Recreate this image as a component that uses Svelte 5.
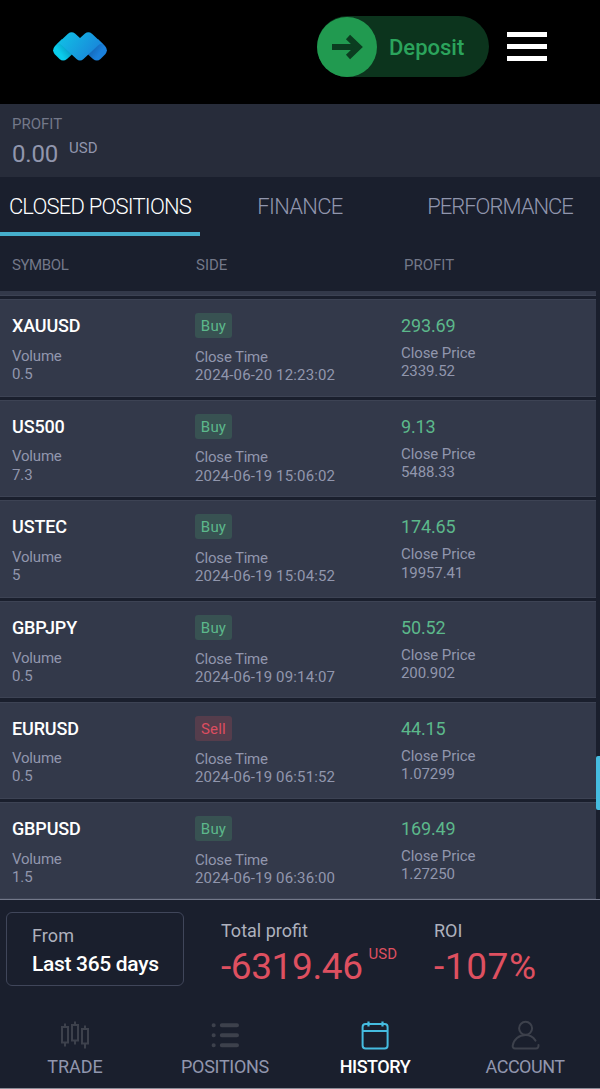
<script lang="ts">
	const tabs = [
		{ key: 'closed', text: 'CLOSED POSITIONS' },
		{ key: 'finance', text: 'FINANCE' },
		{ key: 'performance', text: 'PERFORMANCE' }
	];
	let activeTab = $state('closed');

	const positions = [
		{ symbol: 'XAUUSD', volume: '0.5', side: 'Buy', time: '2024-06-20 12:23:02', profit: '293.69', price: '2339.52' },
		{ symbol: 'US500', volume: '7.3', side: 'Buy', time: '2024-06-19 15:06:02', profit: '9.13', price: '5488.33' },
		{ symbol: 'USTEC', volume: '5', side: 'Buy', time: '2024-06-19 15:04:52', profit: '174.65', price: '19957.41' },
		{ symbol: 'GBPJPY', volume: '0.5', side: 'Buy', time: '2024-06-19 09:14:07', profit: '50.52', price: '200.902' },
		{ symbol: 'EURUSD', volume: '0.5', side: 'Sell', time: '2024-06-19 06:51:52', profit: '44.15', price: '1.07299' },
		{ symbol: 'GBPUSD', volume: '1.5', side: 'Buy', time: '2024-06-19 06:36:00', profit: '169.49', price: '1.27250' }
	];

	const nav = [
		{ key: 'trade', text: 'TRADE' },
		{ key: 'positions', text: 'POSITIONS' },
		{ key: 'history', text: 'HISTORY' },
		{ key: 'account', text: 'ACCOUNT' }
	];
	let activeNav = $state('history');
</script>

<div class="app">
	<header>
		<svg class="logo" width="56" height="32" viewBox="0 0 56 32">
			<defs>
				<linearGradient id="body" x1="0" y1="0" x2="1" y2="0.4">
					<stop offset="0" stop-color="#0fc8e6" />
					<stop offset="1" stop-color="#1a84da" />
				</linearGradient>
				<linearGradient id="left" x1="0.9" y1="0.3" x2="0.4" y2="0.7">
					<stop offset="0" stop-color="#078fb8" />
					<stop offset="1" stop-color="#0acdec" />
				</linearGradient>
				<linearGradient id="right" x1="0.1" y1="0.3" x2="0.6" y2="0.7">
					<stop offset="0" stop-color="#1260ac" />
					<stop offset="1" stop-color="#1a80dc" />
				</linearGradient>
			</defs>
			<path d="M10 8L3 15Q-.5 19 2.500 23L7.500 28Q11 31 15 28L20 23.500Z" fill="url(#left)" />
			<path d="M46 8L53 15Q56.500 19 53.500 23L48.500 28Q45 31 41 28L36 23.500Z" fill="url(#right)" />
			<path
				d="M3 15L16 2.800Q19.500 0 23 2.500L28 7L33 2.500Q36.500 0 40 2.800L53 15Q49.500 11.500 46 14.500L31.500 28Q28 31 24.500 28L10 14.500Q6.500 11.500 3 15Z"
				fill="url(#body)"
			/>
		</svg>
		<button class="deposit">
			<span class="deposit-icon">
				<svg width="32" height="26" viewBox="0 0 32 26" fill="none" stroke="#0b3d20">
					<path d="M1 13H27" stroke-width="6" />
					<path d="M17 3L27.500 13L17 23" stroke-width="6" />
				</svg>
			</span>
			<span class="deposit-text">Deposit</span>
		</button>
		<button class="menu" aria-label="Menu">
			<span></span>
			<span></span>
			<span></span>
		</button>
	</header>

	<section class="balance">
		<div class="balance-label">PROFIT</div>
		<div class="balance-value">0.00 <span class="currency">USD</span></div>
	</section>

	<div class="tabs">
		{#each tabs as tab (tab.key)}
			<button class="tab {tab.key}" class:active={tab.key === activeTab} onclick={() => (activeTab = tab.key)}>
				<span>{tab.text}</span>
			</button>
		{/each}
	</div>

	<div class="columns">
		<span class="col-symbol">SYMBOL</span>
		<span class="col-side">SIDE</span>
		<span>PROFIT</span>
	</div>

	<div class="list">
		<div class="cards">
			<div class="card clipped"></div>
			{#each positions as p (p.symbol)}
				<div class="card">
					<div class="cell first">
						<div class="symbol">{p.symbol}</div>
						<div class="detail volume">Volume</div>
						<div class="detail">{p.volume}</div>
					</div>
					<div class="cell second">
						<div class="badge" class:sell={p.side === 'Sell'}>{p.side}</div>
						<div class="detail close-time">Close Time</div>
						<div class="detail time">{p.time}</div>
					</div>
					<div class="cell">
						<div class="profit">{p.profit}</div>
						<div class="detail">Close Price</div>
						<div class="detail">{p.price}</div>
					</div>
				</div>
			{/each}
		</div>
		<div class="scrollbar"><div class="thumb"></div></div>
	</div>

	<section class="summary">
		<button class="range">
			<span class="range-label">From</span>
			<span class="range-value">Last 365 days</span>
		</button>
		<div class="stat total">
			<div class="stat-label">Total profit</div>
			<div class="stat-value">-6319.46 <span class="currency">USD</span></div>
		</div>
		<div class="stat roi">
			<div class="stat-label">ROI</div>
			<div class="stat-value">-107%</div>
		</div>
	</section>

	<nav>
		{#each nav as item (item.key)}
			<button class="nav-item {item.key}" class:active={item.key === activeNav} onclick={() => (activeNav = item.key)}>
				<svg width="30" height="30" viewBox="0 0 30 30" fill="none" stroke="currentColor" stroke-width="2">
					{#if item.key === 'trade'}
						<rect x="2" y="7" width="6" height="15.500" />
						<rect x="12" y="5" width="6" height="15.500" />
						<rect x="22" y="9" width="6" height="14.500" />
						<path d="M5 3.500V7M5 22.500V26.500M15 1.500V5M15 20.500V24.500M25 5.500V9M25 23.500V28.500" />
					{:else if item.key === 'positions'}
						<g stroke-width="4" stroke-linecap="round">
							<path d="M3.600 5.200h.1M3.600 15.200h.1M3.600 25.200h.1" />
							<path d="M11.800 5.200H27M11.800 15.200H27M11.800 25.200H27" />
						</g>
					{:else if item.key === 'history'}
						<rect x="2.600" y="4" width="25" height="24.500" rx="3" />
						<path d="M2.600 11H27.600" />
						<path d="M8.500 1.500V6.500M22.500 1.500V6.500" stroke-width="2.200" />
					{:else}
						<circle cx="15.600" cy="8.300" r="6.500" />
						<path
							d="M25.500 20.600C23 16.900 19.500 15.100 15.600 15.100C8.800 15.100 3.800 19.500 2.700 25.600C2.500 27.300 3.300 28.500 5 28.500H26C27.700 28.500 28.600 27.300 28.500 25"
							stroke-linecap="round"
						/>
					{/if}
				</svg>
				<span>{item.text}</span>
			</button>
		{/each}
	</nav>
</div>

<style>
	:global(body) {
		margin: 0;
		background: #1a1f2d;
	}

	.app {
		height: 1089px;
		display: flex;
		flex-direction: column;
		overflow: hidden;
		font-family: Roboto, sans-serif;
		color: #9196ad;
		background: #1a1f2d;
	}

	button {
		padding: 0;
		border: 0;
		background: none;
		font: inherit;
		color: inherit;
		text-align: left;
	}

	header {
		box-sizing: border-box;
		height: 104px;
		flex-shrink: 0;
		display: flex;
		align-items: center;
		padding: 0 53px 11px 52px;
		background: #000;
	}

	.logo {
		margin-right: auto;
	}

	.deposit {
		width: 172px;
		height: 61px;
		display: flex;
		align-items: center;
		border-radius: 31px;
		background: #0c341d;
	}

	.deposit-icon {
		width: 60px;
		height: 60px;
		display: flex;
		align-items: center;
		justify-content: center;
		border-radius: 50%;
		background: #219a50;
	}

	.deposit-text {
		margin: 1px 0 0 12px;
		font-size: 22px;
		font-weight: 500;
		color: #2ba45c;
	}

	.menu {
		margin-left: 18px;
		width: 40px;
		display: flex;
		flex-direction: column;
		gap: 7px;
	}

	.menu span {
		height: 5px;
		background: #fff;
	}

	.balance {
		box-sizing: border-box;
		height: 73px;
		flex-shrink: 0;
		padding: 11px 12px 0;
		background: #272c3a;
	}

	.balance-label {
		font-size: 15px;
		line-height: 18px;
		color: #737889;
	}

	.balance-value {
		display: flex;
		gap: 11px;
		margin-top: 7px;
		font-size: 24px;
		line-height: 28px;
		letter-spacing: -0.2px;
	}

	.balance-value .currency {
		line-height: 16px;
	}

	.currency {
		font-size: 15px;
		letter-spacing: 0;
	}

	.tabs {
		height: 59px;
		flex-shrink: 0;
		display: flex;
	}

	.tab {
		box-sizing: border-box;
		width: 200px;
		padding-top: 4px;
		border-bottom: 4px solid transparent;
		text-align: center;
		font-size: 22px;
		font-weight: 300;
	}

	.tab.active {
		color: #fff;
		border-color: #45aecb;
	}

	.tab.closed {
		letter-spacing: -0.8px;
	}

	.tab.finance {
		letter-spacing: -0.7px;
	}

	.tab.performance {
		letter-spacing: -1px;
	}

	.columns {
		box-sizing: border-box;
		height: 55px;
		flex-shrink: 0;
		display: flex;
		padding: 20px 12px 0;
		font-size: 15px;
		line-height: 18px;
		color: #737889;
	}

	.col-symbol {
		width: 184px;
		letter-spacing: -0.4px;
	}

	.col-side {
		width: 208px;
	}

	.list {
		height: 608px;
		flex-shrink: 0;
		display: flex;
		overflow: hidden;
	}

	.cards {
		width: 596px;
		display: flex;
		flex-direction: column;
		gap: 3.2px;
	}

	.card {
		box-sizing: border-box;
		height: 97.4px;
		flex-shrink: 0;
		display: flex;
		padding-left: 12px;
		border-top: 1px solid #3d4354;
		border-bottom: 1px solid #3d4354;
		background: #33394a;
	}

	.card.clipped {
		height: 5px;
		border-top: 0;
	}

	.cell {
		padding-top: 15px;
	}

	.first {
		width: 183px;
	}

	.second {
		width: 206px;
		padding-top: 13px;
	}

	.symbol,
	.profit {
		font-size: 18px;
		line-height: 22px;
		letter-spacing: -0.15px;
	}

	.symbol {
		margin-bottom: 9.6px;
		font-weight: 500;
		color: #fff;
	}

	.profit {
		margin-bottom: 7px;
		color: #5cb88b;
	}

	.detail {
		font-size: 15px;
		line-height: 18.200px;
		letter-spacing: -0.1px;
	}

	.detail.volume,
	.detail.close-time {
		letter-spacing: -0.2px;
	}

	.detail.time {
		letter-spacing: 0.15px;
	}

	.badge {
		width: 37px;
		height: 25px;
		margin-bottom: 9.6px;
		border-radius: 3px;
		text-align: center;
		font-size: 15px;
		line-height: 26px;
		letter-spacing: 0.2px;
		color: #5cb88b;
		background: #385252;
	}

	.badge.sell {
		color: #dc4d60;
		background: #553d4c;
	}

	.scrollbar {
		width: 4px;
		padding-top: 465px;
	}

	.thumb {
		height: 54px;
		border-radius: 2px 0 0 2px;
		background: #45bce0;
	}

	.summary {
		box-sizing: border-box;
		height: 107px;
		flex-shrink: 0;
		display: flex;
		padding: 12px 6px 0;
		border-top: 1px solid #73788a;
	}

	.range {
		box-sizing: border-box;
		width: 178px;
		height: 74px;
		display: flex;
		flex-direction: column;
		padding: 12px 0 0 25px;
		border: 1px solid #40465a;
		border-radius: 6px;
	}

	.range-label {
		font-size: 18px;
		line-height: 22px;
		letter-spacing: 0.1px;
		color: #aeb1bd;
	}

	.range-value {
		margin-top: 4px;
		font-size: 21px;
		font-weight: 500;
		line-height: 26px;
		letter-spacing: -0.32px;
		color: #fff;
	}

	.stat {
		padding-top: 8px;
	}

	.total {
		width: 213px;
		margin-left: 37px;
	}

	.stat-label {
		font-size: 18px;
		line-height: 22px;
		color: #aeb1bd;
	}

	.stat-value {
		display: flex;
		gap: 6px;
		margin-top: 3px;
		font-size: 37px;
		line-height: 44px;
		letter-spacing: -0.4px;
		color: #de5060;
	}

	.roi .stat-value {
		letter-spacing: 0.6px;
	}

	.stat-value .currency {
		line-height: 18px;
		letter-spacing: 0;
	}

	nav {
		box-sizing: border-box;
		height: 83px;
		flex-shrink: 0;
		display: flex;
		border-bottom: 1px solid #8b8e98;
	}

	.nav-item {
		width: 150px;
		display: flex;
		flex-direction: column;
		align-items: center;
		padding-top: 14px;
		font-size: 18px;
		line-height: 22px;
	}

	.nav-item svg {
		margin-bottom: 6px;
		color: #3d414c;
	}

	.nav-item.active {
		color: #fff;
		font-weight: 500;
	}

	.nav-item.active svg {
		color: #45bce0;
	}

	.nav-item.positions {
		letter-spacing: -0.3px;
	}

	.nav-item.history,
	.nav-item.account {
		letter-spacing: -0.5px;
	}
</style>
